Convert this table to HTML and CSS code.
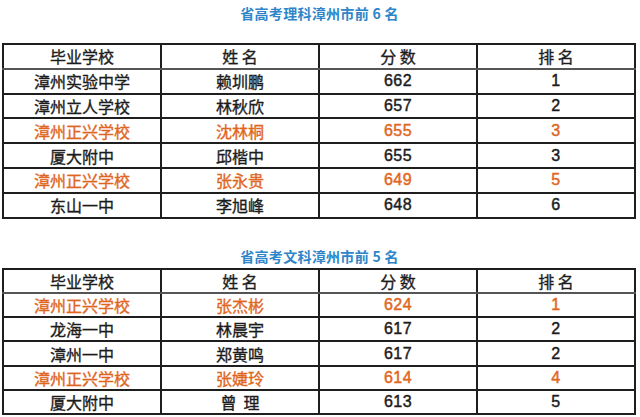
FILE: index.html
```html
<!DOCTYPE html>
<html lang="zh">
<head>
<meta charset="utf-8">
<link rel="stylesheet" href="styles.css">
</head>
<body>
<div class="page">
  <h2 class="title t1">省高考理科漳州市前 6 名</h2>
  <table class="rank r1">
    <tr class="head"><td>毕业学校</td><td>姓&nbsp;名</td><td>分&nbsp;数</td><td>排&nbsp;名</td></tr>
    <tr><td>漳州实验中学</td><td>赖圳鹏</td><td class="num">662</td><td class="num">1</td></tr>
    <tr><td>漳州立人学校</td><td>林秋欣</td><td class="num">657</td><td class="num">2</td></tr>
    <tr class="hl"><td>漳州正兴学校</td><td>沈林桐</td><td class="num">655</td><td class="num">3</td></tr>
    <tr><td>厦大附中</td><td>邱楷中</td><td class="num">655</td><td class="num">3</td></tr>
    <tr class="hl"><td>漳州正兴学校</td><td>张永贵</td><td class="num">649</td><td class="num">5</td></tr>
    <tr><td>东山一中</td><td>李旭峰</td><td class="num">648</td><td class="num">6</td></tr>
  </table>
  <h2 class="title t2">省高考文科漳州市前 5 名</h2>
  <table class="rank r2">
    <tr class="head"><td>毕业学校</td><td>姓&nbsp;名</td><td>分&nbsp;数</td><td>排&nbsp;名</td></tr>
    <tr class="hl"><td>漳州正兴学校</td><td>张杰彬</td><td class="num">624</td><td class="num">1</td></tr>
    <tr><td>龙海一中</td><td>林晨宇</td><td class="num">617</td><td class="num">2</td></tr>
    <tr><td>漳州一中</td><td>郑黄鸣</td><td class="num">617</td><td class="num">2</td></tr>
    <tr class="hl"><td>漳州正兴学校</td><td>张婕玲</td><td class="num">614</td><td class="num">4</td></tr>
    <tr><td>厦大附中</td><td>曾&nbsp;&nbsp;理</td><td class="num">613</td><td class="num">5</td></tr>
  </table>
</div>
</body>
</html>
```

FILE: styles.css
```css
html, body {
  margin: 0;
  padding: 0;
  background: #ffffff;
}

.page {
  width: 640px;
  height: 417px;
  overflow: hidden;
  padding: 0 3px 0 2px;
  box-sizing: border-box;
  font-family: "Noto Sans CJK SC", "Noto Sans", sans-serif;
  color: #1c1c1c;
}

.title {
  margin: 0;
  text-align: center;
  font-size: 14px;
  font-weight: bold;
  color: #2e85c9;
  letter-spacing: 0.3px;
}

.t1 {
  height: 26px;
  line-height: 26px;
  margin-bottom: 17px;
}

.t2 {
  height: 20px;
  line-height: 20px;
  margin-top: 27px;
  margin-bottom: 2px;
}

.rank {
  width: 634px;
  border-collapse: collapse;
  table-layout: fixed;
}

.rank td {
  border: 2px solid #1e1e1e;
  text-align: center;
  vertical-align: middle;
  padding: 0;
  font-size: 16px;
  line-height: 18px;
  -webkit-text-stroke: 0.35px currentColor;
}

.r1 tr {
  height: 24.8px;
}

.r2 tr {
  height: 24.3px;
}

.rank .num {
  font-family: "Liberation Sans", Arial, sans-serif;
  font-size: 16px;
  letter-spacing: 0.5px;
  -webkit-text-stroke: 0.45px currentColor;
}

.rank .head td {
  border-bottom-color: #555555;
}

.rank .hl td {
  color: #e0661e;
}
```
